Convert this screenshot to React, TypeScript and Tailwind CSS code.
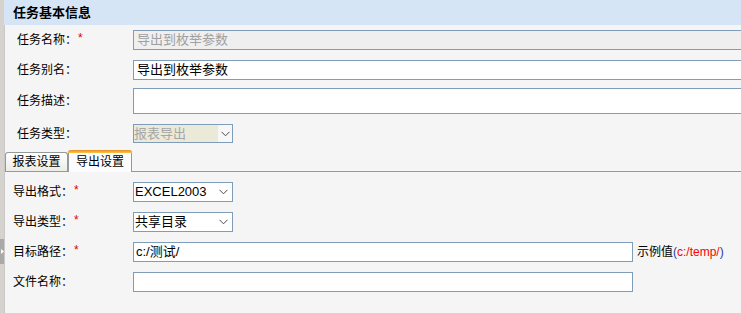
import React from "react";

const FONT = { fontFamily: '"Liberation Sans", "Noto Sans CJK SC", Arial, sans-serif' };

function Chevron() {
  return (
    <svg width="9" height="6" viewBox="0 0 9 6" className="shrink-0">
      <polyline points="0.5,0.8 4.5,4.8 8.5,0.8" fill="none" stroke="#4a4a4a" strokeWidth="1" />
    </svg>
  );
}

function Label({ text, req, pl }: { text: string; req?: boolean; pl: string }) {
  return (
    <div className={`w-[128px] shrink-0 flex items-center text-[12px] text-black ${pl}`}>
      <span>{text}</span>
      {req && <span className="ml-[1px] text-[#e00000] text-[12px] -mt-[4px]">*</span>}
    </div>
  );
}

export default function App() {
  return (
    <div className="w-[741px] h-[313px] overflow-hidden flex bg-[#f5f5f5]" style={FONT}>
      {/* left splitter strip */}
      <div className="w-[4px] shrink-0 bg-[#d6d3ce] flex flex-col">
        <div className="mt-[239px] h-[25px] bg-[#a9a9a9] flex items-center justify-center">
          <svg width="3" height="5" viewBox="0 0 3 5">
            <polygon points="0,0 3,2.5 0,5" fill="#ffffff" />
          </svg>
        </div>
      </div>

      <div className="flex-1 flex flex-col min-w-0">
        {/* header */}
        <div className="h-[25px] shrink-0 bg-[#d5e5f5] pl-[9px] flex items-center text-[13px] font-bold text-black">
          任务基本信息
        </div>

        <div className="flex-1 flex flex-col border-l border-[#c9c9c9] min-w-0">
          {/* top form */}
          <div className="flex flex-col pt-[5px]">
            <div className="flex h-[20px]">
              <Label text="任务名称：" req pl="pl-[12px]" />
              <div className="w-[620px] shrink-0 h-[20px] border border-[#7f9db9] bg-[#efefef] flex items-center pl-[3px] text-[13px] text-[#a0a0a0]">
                导出到枚举参数
              </div>
            </div>
            <div className="flex h-[20px] mt-[10px]">
              <Label text="任务别名：" pl="pl-[12px]" />
              <div className="w-[620px] shrink-0 h-[20px] border border-[#7f9db9] bg-white flex items-center pl-[3px] text-[13px] text-black">
                导出到枚举参数
              </div>
            </div>
            <div className="flex h-[26px] mt-[8px]">
              <Label text="任务描述：" pl="pl-[12px]" />
              <div className="w-[620px] shrink-0 h-[26px] border border-[#7f9db9] bg-white" />
            </div>
            <div className="flex h-[19px] mt-[10px]">
              <Label text="任务类型：" pl="pl-[12px]" />
              <div className="w-[100px] shrink-0 h-[19px] border border-[#7f9db9] bg-[#f7f7f7] flex items-stretch">
                <div className="w-[84px] bg-[#ebe9d8] flex items-center text-[13px] text-[#a6a6a6]">报表导出</div>
                <div className="flex-1 flex items-center justify-center">
                  <Chevron />
                </div>
              </div>
            </div>
          </div>

          {/* tabs */}
          <div className="mt-[7px] h-[21px] flex items-end shrink-0">
            <div className="w-[63px] h-[19px] border border-b-0 border-[#919b9c] rounded-t-[3px] bg-gradient-to-b from-[#ffffff] to-[#ecebe5] flex items-center justify-center text-[12px] text-black">
              报表设置
            </div>
            <div className="w-[64px] h-[22px] -mb-[1px] relative z-10 border-x border-[#919b9c] rounded-t-[3px] bg-[#fcfcfe] flex flex-col">
              <div className="h-[3px] rounded-t-[3px] bg-gradient-to-b from-[#e68b2c] to-[#ffc73c] -mx-[1px]" />
              <div className="flex-1 flex items-center justify-center text-[12px] text-black pb-[1px]">导出设置</div>
            </div>
          </div>

          {/* tab panel */}
          <div className="flex-1 border-t border-[#919b9c] bg-[#f5f5f5] flex flex-col pt-[10px] gap-[10px]">
            <div className="flex h-[20px]">
              <Label text="导出格式：" req pl="pl-[8px]" />
              <div className="w-[100px] shrink-0 h-[20px] border border-[#7f9db9] bg-white flex items-center pl-[1px] pr-[4px] text-[13px] text-black">
                <span className="flex-1">EXCEL2003</span>
                <Chevron />
              </div>
            </div>
            <div className="flex h-[20px]">
              <Label text="导出类型：" req pl="pl-[8px]" />
              <div className="w-[100px] shrink-0 h-[20px] border border-[#7f9db9] bg-white flex items-center pl-[1px] pr-[4px] text-[13px] text-black">
                <span className="flex-1">共享目录</span>
                <Chevron />
              </div>
            </div>
            <div className="flex h-[20px] items-center">
              <Label text="目标路径：" req pl="pl-[8px]" />
              <div className="w-[500px] shrink-0 h-[20px] border border-[#7f9db9] bg-white flex items-center pl-[2px] text-[13px] text-black">
                c:/测试/
              </div>
              <div className="ml-[4px] text-[12px] text-black whitespace-nowrap">
                示例值<span className="text-[#1f3f9f]">(</span>
                <span className="text-[#ff0000]">c:/temp/</span>
                <span className="text-[#1f3f9f]">)</span>
              </div>
            </div>
            <div className="flex h-[20px]">
              <Label text="文件名称：" pl="pl-[8px]" />
              <div className="w-[500px] shrink-0 h-[20px] border border-[#7f9db9] bg-white" />
            </div>
          </div>
        </div>
      </div>
    </div>
  );
}
